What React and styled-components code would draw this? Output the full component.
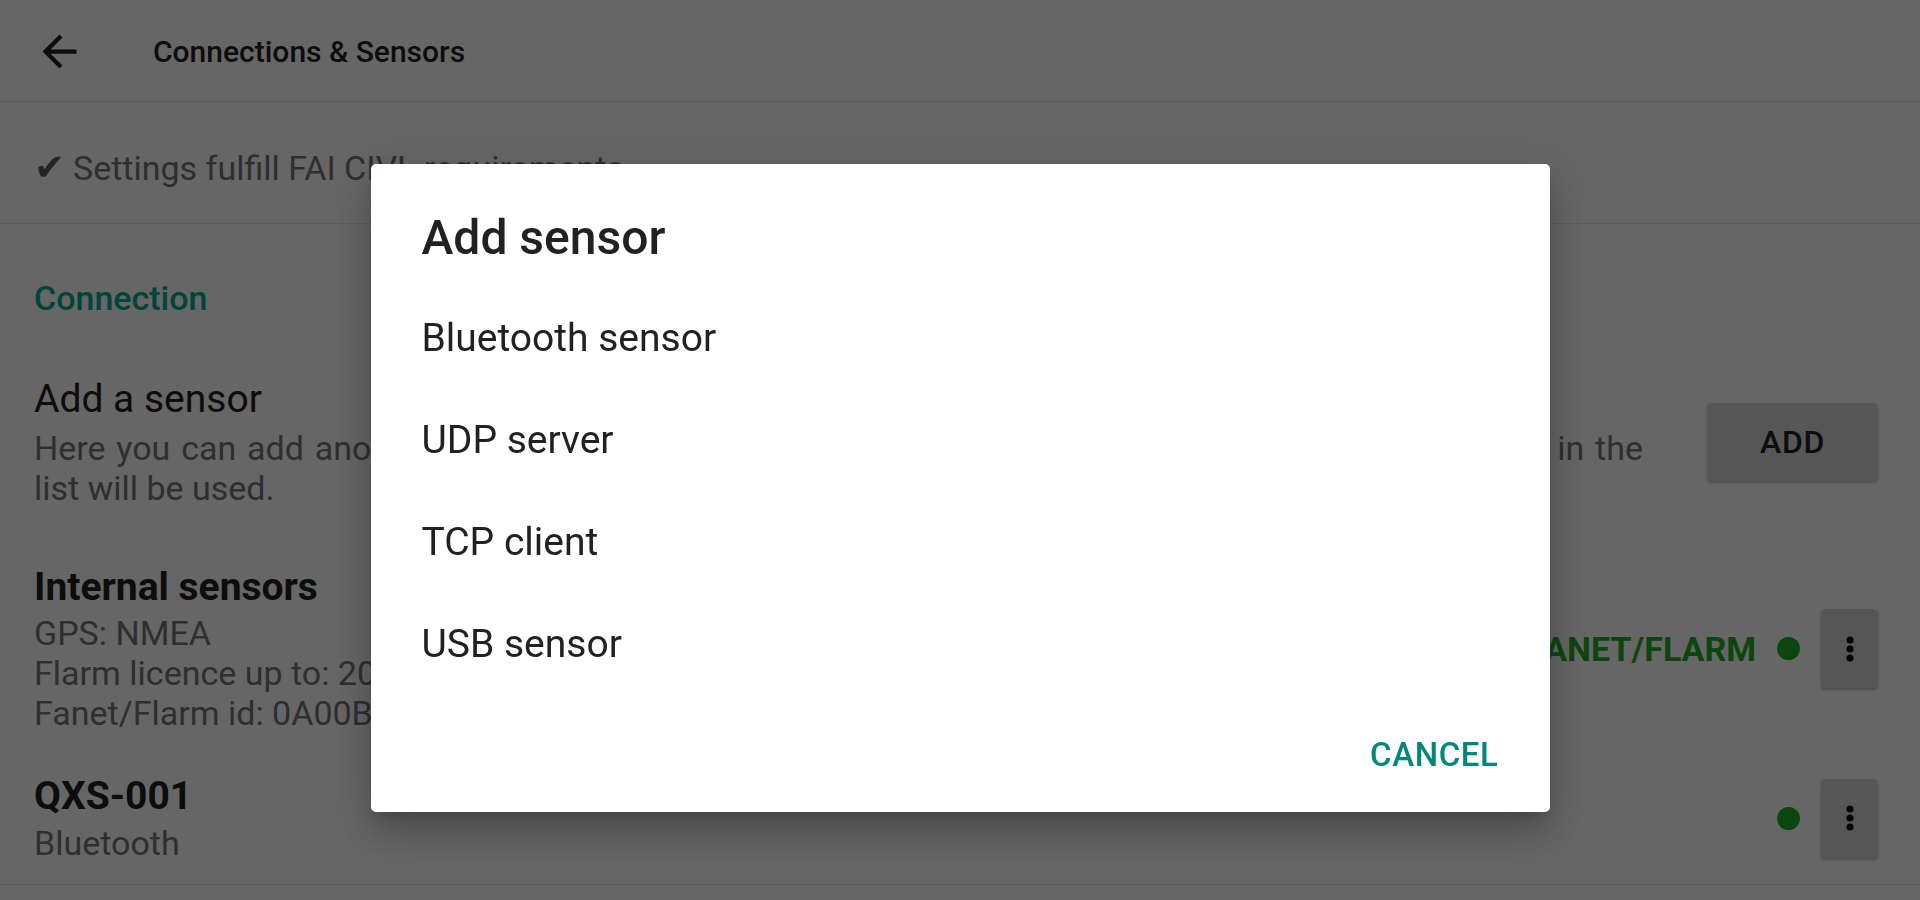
import React from 'react';
import styled, { createGlobalStyle } from 'styled-components';

const GlobalStyle = createGlobalStyle`
  html, body {
    margin: 0;
    padding: 0;
    background: #ffffff;
    font-family: Roboto, "Noto Sans", "Liberation Sans", sans-serif;
  }
  * { box-sizing: border-box; }
`;

const Page = styled.div`
  min-height: 900px;
  background: #ffffff;
  color: #212121;
`;

const Toolbar = styled.header`
  height: 102px;
  display: flex;
  align-items: center;
  padding: 2px 0 0 34px;
  border-bottom: 1px solid #e4e4e4;
`;

const BackIcon = styled.svg`
  width: 51px;
  height: 51px;
  fill: #212121;
  flex-shrink: 0;
`;

const ToolbarTitle = styled.h1`
  margin: 0 0 0 68px;
  font-size: 30px;
  font-weight: 500;
  color: #212121;
`;

const ComplianceRow = styled.div`
  height: 122px;
  display: flex;
  align-items: center;
  padding: 10px 0 0 34px;
  font-size: 34px;
  color: #757575;
  border-bottom: 1px solid #e4e4e4;
`;

const Check = styled.span`
  font-family: "DejaVu Sans", sans-serif;
  font-size: 37px;
  color: #5a5a5a;
  margin-right: 8px;
`;

const Content = styled.main`
  padding: 0 42px 0 34px;
`;

const Category = styled.div`
  margin-top: 54px;
  font-size: 34px;
  line-height: 40px;
  font-weight: 500;
  color: #00ad94;
`;

const Pref = styled.div`
  display: flex;
  align-items: center;
  margin-top: ${p => p.gap}px;
`;

const PrefText = styled.div`
  flex: 1;
  min-width: 0;
`;

const PrefTitle = styled.div`
  font-size: 39px;
  line-height: 46px;
  font-weight: ${p => (p.bold ? 700 : 400)};
  color: #212121;
`;

const Summary = styled.div`
  margin-top: ${p => p.offset || 0}px;
  font-size: 34px;
  line-height: 40px;
  color: #757575;
  white-space: nowrap;
  text-align: left;
  text-align-last: ${p => (p.justify ? 'justify' : 'left')};
  width: ${p => (p.justify ? '1609px' : 'auto')};
  overflow: hidden;
`;

const RaisedButton = styled.button`
  border: none;
  border-radius: 4px;
  background: #d6d6d6;
  box-shadow: 0 2px 3px rgba(0, 0, 0, 0.25);
  font-family: inherit;
  color: #212121;
  display: flex;
  align-items: center;
  justify-content: center;
  flex-shrink: 0;
  padding: 0;
`;

const AddButton = styled(RaisedButton)`
  width: 171px;
  height: 78px;
  margin-left: 64px;
  font-size: 32px;
  font-weight: 500;
  letter-spacing: 0.6px;
`;

const MenuButton = styled(RaisedButton)`
  width: 57px;
  height: 79px;
  margin-left: 21px;
`;

const Status = styled.div`
  font-size: 34px;
  font-weight: 700;
  color: #1fae25;
  margin-right: 21px;
`;

const Dot = styled.span`
  width: 23px;
  height: 23px;
  border-radius: 50%;
  background: #1fae25;
  flex-shrink: 0;
`;

const Divider = styled.div`
  margin: 21px -42px 0 -34px;
  border-top: 1px solid #e4e4e4;
`;

const Scrim = styled.div`
  position: fixed;
  inset: 0;
  background: rgba(0, 0, 0, 0.6);
  display: flex;
  justify-content: center;
  align-items: flex-start;
  padding-top: 164px;
`;

const Dialog = styled.div`
  width: 1179px;
  background: #ffffff;
  border-radius: 5px;
  box-shadow: 0 11px 15px -7px rgba(0, 0, 0, 0.2), 0 24px 38px 3px rgba(0, 0, 0, 0.14),
    0 9px 46px 8px rgba(0, 0, 0, 0.12);
`;

const DialogTitle = styled.h2`
  margin: 0;
  padding: 46px 51px 0;
  font-size: 48px;
  line-height: 56px;
  font-weight: 500;
  color: #212121;
`;

const OptionList = styled.ul`
  list-style: none;
  margin: 21px 0 0;
  padding: 0;
`;

const Option = styled.li`
  height: 102px;
  display: flex;
  align-items: center;
  padding: 0 51px;
  font-size: 39px;
  color: #212121;
`;

const DialogActions = styled.div`
  display: flex;
  justify-content: flex-end;
  padding: 15px 30px 14px;
`;

const TextButton = styled.button`
  height: 88px;
  padding: 0 21px;
  border: none;
  background: transparent;
  font-family: inherit;
  font-size: 33px;
  font-weight: 500;
  letter-spacing: 0.6px;
  color: #00887a;
  text-transform: uppercase;
`;

const MoreIcon = () => (
  <svg width="20" height="36" viewBox="0 0 20 36" fill="#111">
    <circle cx="10" cy="9" r="3.6" />
    <circle cx="10" cy="18" r="3.6" />
    <circle cx="10" cy="27" r="3.6" />
  </svg>
);

const sensorOptions = ['Bluetooth sensor', 'UDP server', 'TCP client', 'USB sensor'];

export default function App() {
  return (
    <>
      <GlobalStyle />
      <Page>
        <Toolbar>
          <BackIcon viewBox="0 0 24 24">
            <path d="M20 11H7.83l5.59-5.59L12 4l-8 8 8 8 1.41-1.41L7.83 13H20v-2z" />
          </BackIcon>
          <ToolbarTitle>Connections &amp; Sensors</ToolbarTitle>
        </Toolbar>

        <ComplianceRow>
          <Check>✔</Check>Settings fulfill FAI CIVL requirements
        </ComplianceRow>

        <Content>
          <Category>Connection</Category>

          <Pref gap={58}>
            <PrefText>
              <PrefTitle>Add a sensor</PrefTitle>
              <Summary justify offset={6}>
                Here you can add another sensor. When multiple sensors are connected, only the first working one in the
              </Summary>
              <Summary>list will be used.</Summary>
            </PrefText>
            <AddButton>ADD</AddButton>
          </Pref>

          <Pref gap={56}>
            <PrefText>
              <PrefTitle bold>Internal sensors</PrefTitle>
              <Summary offset={3}>GPS: NMEA</Summary>
              <Summary>Flarm licence up to: 2030-01-01</Summary>
              <Summary>Fanet/Flarm id: 0A00B7</Summary>
            </PrefText>
            <Status>FANET/FLARM</Status>
            <Dot />
            <MenuButton>
              <MoreIcon />
            </MenuButton>
          </Pref>

          <Pref gap={40}>
            <PrefText>
              <PrefTitle bold>QXS-001</PrefTitle>
              <Summary offset={4}>Bluetooth</Summary>
            </PrefText>
            <Dot />
            <MenuButton>
              <MoreIcon />
            </MenuButton>
          </Pref>

          <Divider />
        </Content>
      </Page>

      <Scrim>
        <Dialog role="dialog">
          <DialogTitle>Add sensor</DialogTitle>
          <OptionList>
            {sensorOptions.map(o => (
              <Option key={o}>{o}</Option>
            ))}
          </OptionList>
          <DialogActions>
            <TextButton>Cancel</TextButton>
          </DialogActions>
        </Dialog>
      </Scrim>
    </>
  );
}
